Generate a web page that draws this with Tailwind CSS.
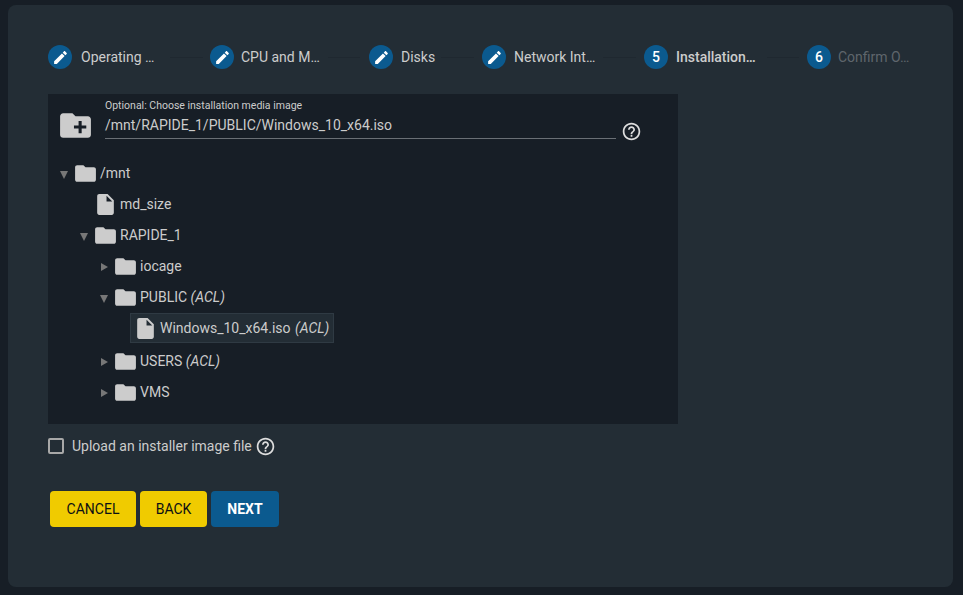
<!DOCTYPE html>
<html lang="en">
<head>
  <meta charset="UTF-8">
  <title>VM Wizard</title>
  <script src="https://cdn.jsdelivr.net/npm/@tailwindcss/browser@4"></script>
</head>
<body class="bg-[#171e26] font-['Roboto','Liberation_Sans',sans-serif] text-[#cccccc] h-[595px] w-[963px] overflow-hidden">
  <div class="ml-[8px] mt-[5px] w-[945px] h-[582px] inline-block align-top bg-[#232d35] rounded-lg pt-[40px] pl-[40px]">

    <!-- Stepper -->
    <div class="flex items-center h-[24px] w-[863px] text-sm">
      <div class="flex items-center shrink-0">
        <span class="w-6 h-6 rounded-full bg-[#0b5a8f] flex items-center justify-center"><svg class="w-[17px] h-[17px]" viewBox="0 0 24 24" fill="#fff"><path d="M3 17.25V21h3.75L17.81 9.94l-3.75-3.75L3 17.25zM20.71 7.04c.39-.39.39-1.02 0-1.41l-2.34-2.34c-.39-.39-1.02-.39-1.41 0l-1.83 1.83 3.75 3.75 1.83-1.83z"/></svg></span>
        <span class="ml-[9px] w-[74px] whitespace-nowrap">Operating …</span>
      </div>
      <div class="w-[33px] h-px bg-[#1f2830] ml-[15px] mr-[7px] shrink-0"></div>
      <div class="flex items-center shrink-0">
        <span class="w-6 h-6 rounded-full bg-[#0b5a8f] flex items-center justify-center"><svg class="w-[17px] h-[17px]" viewBox="0 0 24 24" fill="#fff"><path d="M3 17.25V21h3.75L17.81 9.94l-3.75-3.75L3 17.25zM20.71 7.04c.39-.39.39-1.02 0-1.41l-2.34-2.34c-.39-.39-1.02-.39-1.41 0l-1.83 1.83 3.75 3.75 1.83-1.83z"/></svg></span>
        <span class="ml-[7px] w-[80px] whitespace-nowrap">CPU and M…</span>
      </div>
      <div class="w-[32px] h-px bg-[#1f2830] ml-[7px] mr-[9px] shrink-0"></div>
      <div class="flex items-center shrink-0">
        <span class="w-6 h-6 rounded-full bg-[#0b5a8f] flex items-center justify-center"><svg class="w-[17px] h-[17px]" viewBox="0 0 24 24" fill="#fff"><path d="M3 17.25V21h3.75L17.81 9.94l-3.75-3.75L3 17.25zM20.71 7.04c.39-.39.39-1.02 0-1.41l-2.34-2.34c-.39-.39-1.02-.39-1.41 0l-1.83 1.83 3.75 3.75 1.83-1.83z"/></svg></span>
        <span class="ml-[8px] w-[35px] whitespace-nowrap">Disks</span>
      </div>
      <div class="w-[33px] h-px bg-[#1f2830] ml-[5px] mr-[8px] shrink-0"></div>
      <div class="flex items-center shrink-0">
        <span class="w-6 h-6 rounded-full bg-[#0b5a8f] flex items-center justify-center"><svg class="w-[17px] h-[17px]" viewBox="0 0 24 24" fill="#fff"><path d="M3 17.25V21h3.75L17.81 9.94l-3.75-3.75L3 17.25zM20.71 7.04c.39-.39.39-1.02 0-1.41l-2.34-2.34c-.39-.39-1.02-.39-1.41 0l-1.83 1.83 3.75 3.75 1.83-1.83z"/></svg></span>
        <span class="ml-[8px] w-[82px] whitespace-nowrap">Network Int…</span>
      </div>
      <div class="w-[33px] h-px bg-[#1f2830] ml-[7px] mr-[8px] shrink-0"></div>
      <div class="flex items-center shrink-0">
        <span class="w-6 h-6 rounded-full bg-[#0b5a8f] flex items-center justify-center text-white font-medium">5</span>
        <span class="ml-[8px] w-[81px] whitespace-nowrap font-medium">Installation…</span>
      </div>
      <div class="w-[32px] h-px bg-[#1f2830] ml-[10px] mr-[8px] shrink-0"></div>
      <div class="flex items-center shrink-0">
        <span class="w-6 h-6 rounded-full bg-[#0b5a8f] flex items-center justify-center text-white font-medium">6</span>
        <span class="ml-[7px] w-[73px] whitespace-nowrap text-[#5f666c]">Confirm O…</span>
      </div>
    </div>

    <!-- Explorer -->
    <div class="mt-[25px] w-[630px] h-[330px] bg-[#171e26]">
      <div class="flex items-start h-[63.5px] pl-[9px]">
        <svg class="w-[37px] h-[37px] mt-[13px] shrink-0" viewBox="0 0 24 24" fill="#cccccc"><path d="M20 6h-8l-2-2H4c-1.11 0-1.99.89-1.99 2L2 18c0 1.11.89 2 2 2h16c1.11 0 2-.89 2-2V8c0-1.11-.89-2-2-2zm-1 8h-3v3h-2v-3h-3v-2h3V9h2v3h3v2z"/></svg>
        <div class="ml-[11px] w-[511px] mt-[5px] h-[40px] border-b border-[#6a6f75] shrink-0">
          <div class="text-[10.5px] leading-[14px] mb-[4px]">Optional: Choose installation media image</div>
          <div class="text-sm leading-[17px]">/mnt/RAPIDE_1/PUBLIC/Windows_10_x64.iso</div>
        </div>
        <svg class="w-[21px] h-[21px] ml-[5px] mt-[27px] shrink-0" viewBox="0 0 24 24" fill="#dddddd"><path d="M11 18h2v-2h-2v2zm1-16C6.48 2 2 6.48 2 12s4.48 10 10 10 10-4.48 10-10S17.52 2 12 2zm0 18c-4.41 0-8-3.59-8-8s3.59-8 8-8 8 3.59 8 8-3.59 8-8 8zm0-14c-2.21 0-4 1.79-4 4h2c0-1.1.9-2 2-2s2 .9 2 2c0 2-3 1.75-3 5h2c0-2.25 3-2.5 3-5 0-2.21-1.79-4-4-4z"/></svg>
      </div>

      <!-- Tree -->
      <div class="text-sm pl-[10px]">
        <div class="flex items-center h-[31px]">
          <span class="w-[15px] shrink-0"><svg class="w-[8px] h-[8px] ml-[2px] mt-[3px]" viewBox="0 0 10 8" fill="#777" preserveAspectRatio="none"><path d="M0 0h10L5 8z"/></svg></span>
          <svg class="w-[25px] h-[25px] shrink-0" viewBox="0 0 24 24" fill="#cccccc"><path d="M10 4H4c-1.1 0-1.99.9-1.99 2L2 18c0 1.1.9 2 2 2h16c1.1 0 2-.9 2-2V8c0-1.1-.9-2-2-2h-8l-2-2z"/></svg>
          <span class="ml-[2px]">/mnt</span>
        </div>
        <div class="flex items-center h-[31px] ml-[20px]">
          <span class="w-[15px] shrink-0"></span>
          <svg class="w-[25px] h-[25px] shrink-0" viewBox="0 0 24 24" fill="#cccccc"><path d="M6 2c-1.1 0-1.99.9-1.99 2L4 20c0 1.1.89 2 1.99 2H18c1.1 0 2-.9 2-2V8l-6-6H6zm7 7V3.5L18.5 9H13z"/></svg>
          <span class="ml-[2px]">md_size</span>
        </div>
        <div class="flex items-center h-[31px] ml-[20px]">
          <span class="w-[15px] shrink-0"><svg class="w-[8px] h-[8px] ml-[2px] mt-[3px]" viewBox="0 0 10 8" fill="#777" preserveAspectRatio="none"><path d="M0 0h10L5 8z"/></svg></span>
          <svg class="w-[25px] h-[25px] shrink-0" viewBox="0 0 24 24" fill="#cccccc"><path d="M10 4H4c-1.1 0-1.99.9-1.99 2L2 18c0 1.1.9 2 2 2h16c1.1 0 2-.9 2-2V8c0-1.1-.9-2-2-2h-8l-2-2z"/></svg>
          <span class="ml-[2px]">RAPIDE_1</span>
        </div>
        <div class="flex items-center h-[31px] ml-[40px]">
          <span class="w-[15px] shrink-0"><svg class="w-[7px] h-[8px] ml-[3px] mt-[2px]" viewBox="0 0 7 8" fill="#777"><path d="M0 0l7 4-7 4z"/></svg></span>
          <svg class="w-[25px] h-[25px] shrink-0" viewBox="0 0 24 24" fill="#cccccc"><path d="M10 4H4c-1.1 0-1.99.9-1.99 2L2 18c0 1.1.9 2 2 2h16c1.1 0 2-.9 2-2V8c0-1.1-.9-2-2-2h-8l-2-2z"/></svg>
          <span class="ml-[2px]">iocage</span>
        </div>
        <div class="flex items-center h-[31px] ml-[40px]">
          <span class="w-[15px] shrink-0"><svg class="w-[8px] h-[8px] ml-[2px] mt-[3px]" viewBox="0 0 10 8" fill="#777" preserveAspectRatio="none"><path d="M0 0h10L5 8z"/></svg></span>
          <svg class="w-[25px] h-[25px] shrink-0" viewBox="0 0 24 24" fill="#cccccc"><path d="M10 4H4c-1.1 0-1.99.9-1.99 2L2 18c0 1.1.9 2 2 2h16c1.1 0 2-.9 2-2V8c0-1.1-.9-2-2-2h-8l-2-2z"/></svg>
          <span class="ml-[2px]">PUBLIC <em>(ACL)</em></span>
        </div>
        <div class="flex items-center h-[31px] mb-[2px] ml-[60px]">
          <span class="w-[12px] shrink-0"></span>
          <div class="flex items-center h-[30px] pl-[2px] pr-[4px] bg-[#232d35] border border-[#2f3a43]">
            <svg class="w-[25px] h-[25px] shrink-0" viewBox="0 0 24 24" fill="#cccccc"><path d="M6 2c-1.1 0-1.99.9-1.99 2L4 20c0 1.1.89 2 1.99 2H18c1.1 0 2-.9 2-2V8l-6-6H6zm7 7V3.5L18.5 9H13z"/></svg>
            <span class="ml-[2px]">Windows_10_x64.iso <em class="ml-px">(ACL)</em></span>
          </div>
        </div>
        <div class="flex items-center h-[31px] ml-[40px]">
          <span class="w-[15px] shrink-0"><svg class="w-[7px] h-[8px] ml-[3px] mt-[2px]" viewBox="0 0 7 8" fill="#777"><path d="M0 0l7 4-7 4z"/></svg></span>
          <svg class="w-[25px] h-[25px] shrink-0" viewBox="0 0 24 24" fill="#cccccc"><path d="M10 4H4c-1.1 0-1.99.9-1.99 2L2 18c0 1.1.9 2 2 2h16c1.1 0 2-.9 2-2V8c0-1.1-.9-2-2-2h-8l-2-2z"/></svg>
          <span class="ml-[2px]">USERS <em>(ACL)</em></span>
        </div>
        <div class="flex items-center h-[31px] ml-[40px]">
          <span class="w-[15px] shrink-0"><svg class="w-[7px] h-[8px] ml-[3px] mt-[2px]" viewBox="0 0 7 8" fill="#777"><path d="M0 0l7 4-7 4z"/></svg></span>
          <svg class="w-[25px] h-[25px] shrink-0" viewBox="0 0 24 24" fill="#cccccc"><path d="M10 4H4c-1.1 0-1.99.9-1.99 2L2 18c0 1.1.9 2 2 2h16c1.1 0 2-.9 2-2V8c0-1.1-.9-2-2-2h-8l-2-2z"/></svg>
          <span class="ml-[2px]">VMS</span>
        </div>
      </div>
    </div>

    <!-- Upload checkbox -->
    <div class="flex items-center mt-[12px] h-[20px] text-sm">
      <span class="w-[16px] h-[16px] border-2 border-[#a8a8a8] rounded-[2px] shrink-0"></span>
      <span class="ml-[8px]">Upload an installer image file</span>
      <svg class="w-[21px] h-[21px] ml-[3px] shrink-0" viewBox="0 0 24 24" fill="#dddddd"><path d="M11 18h2v-2h-2v2zm1-16C6.48 2 2 6.48 2 12s4.48 10 10 10 10-4.48 10-10S17.52 2 12 2zm0 18c-4.41 0-8-3.59-8-8s3.59-8 8-8 8 3.59 8 8-3.59 8-8 8zm0-14c-2.21 0-4 1.79-4 4h2c0-1.1.9-2 2-2s2 .9 2 2c0 2-3 1.75-3 5h2c0-2.25 3-2.5 3-5 0-2.21-1.79-4-4-4z"/></svg>
    </div>

    <!-- Actions -->
    <div class="flex gap-[4px] mt-[35px] ml-[2px] text-sm">
      <button class="w-[86px] h-[36px] rounded bg-[#f0cb00] text-[#0c1014]">CANCEL</button>
      <button class="w-[67px] h-[36px] rounded bg-[#f0cb00] text-[#0c1014]">BACK</button>
      <button class="w-[68px] h-[36px] rounded bg-[#0b5a8f] text-white font-bold">NEXT</button>
    </div>
  </div>
</body>
</html>
